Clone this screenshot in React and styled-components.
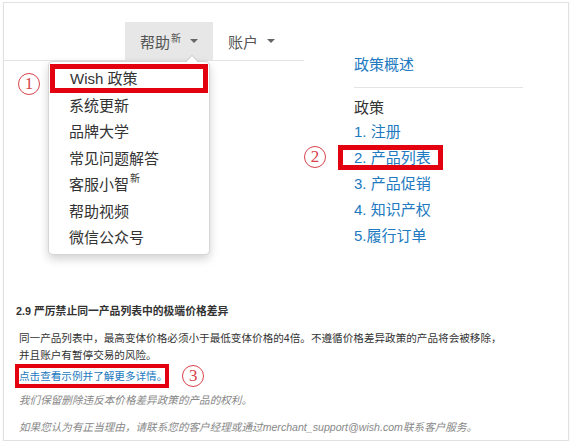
import React from 'react'
import styled, { createGlobalStyle, css } from 'styled-components'

const GlobalStyle = createGlobalStyle`
  body {
    margin: 0;
    background: #fff;
    font-family: "Liberation Sans", "Noto Sans CJK SC", sans-serif;
  }
`

const RED = '#e3000f'
const BLUE = '#2179c0'

const Card = styled.div`
  position: relative;
  box-sizing: border-box;
  margin: 2px 0 0 3px;
  width: 566px;
  height: 439px;
  border: 1px solid #e1e1e1;
  box-shadow: 0 1px 2px rgba(0, 0, 0, 0.06);
`

const Top = styled.div`
  display: grid;
  grid-template-columns: 300px 1fr;
`

const NavBar = styled.nav`
  display: flex;
  align-items: flex-end;
  height: 57px;
  padding-left: 121px;
  border-bottom: 1px solid #e3e3e3;
`

const Tab = styled.div`
  display: flex;
  align-items: center;
  height: 38px;
  padding: 0 15px;
  font-size: 15px;
  color: #555;
  ${p => p.$active && css`
    background: #e7e7e7;
  `}
`

const Sup = styled.sup`
  font-size: 10px;
  line-height: 0;
  position: relative;
  top: -2px;
  margin-left: 1px;
`

const Caret = styled.span`
  width: 0;
  height: 0;
  margin-left: 9px;
  border-left: 4px solid transparent;
  border-right: 4px solid transparent;
  border-top: 4px solid #666;
`

const Menu = styled.ul`
  position: absolute;
  left: 44px;
  top: 58px;
  width: 162px;
  height: 194px;
  box-sizing: border-box;
  margin: 0;
  padding: 2px 0 0;
  list-style: none;
  background: #fff;
  border: 1px solid rgba(0, 0, 0, 0.16);
  border-radius: 5px;
  box-shadow: 0 4px 10px rgba(0, 0, 0, 0.18);

  &::before {
    content: '';
    position: absolute;
    left: 136px;
    top: -7px;
    border-left: 7px solid transparent;
    border-right: 7px solid transparent;
    border-bottom: 7px solid rgba(0, 0, 0, 0.14);
  }
  &::after {
    content: '';
    position: absolute;
    left: 137px;
    top: -6px;
    border-left: 6px solid transparent;
    border-right: 6px solid transparent;
    border-bottom: 6px solid #fff;
  }
`

const MenuItem = styled.li`
  height: 26.4px;
  line-height: 26.4px;
  padding-left: 20px;
  font-size: 15px;
  color: #333;
  ${p => p.$marked && css`
    height: 29px;
    line-height: 29px;
    margin: 0 1px;
    outline: 5px solid ${RED};
    outline-offset: -5px;
  `}
`

const Circled = styled.span`
  display: inline-flex;
  align-items: center;
  justify-content: center;
  box-sizing: border-box;
  width: 22px;
  height: 22px;
  border: 1px solid #d8434b;
  border-radius: 50%;
  font-family: "Liberation Serif", serif;
  font-size: 17px;
  color: #d8434b;
`

const FloatingMark = styled(Circled)`
  position: absolute;
  left: 14px;
  top: 70px;
`

const Side = styled.div`
  padding-top: 50px;
`

const SideHead = styled.div`
  margin-left: 50px;
  line-height: 24px;
  font-size: 15px;
  color: ${BLUE};
`

const Divider = styled.hr`
  margin: 10px 0 0 50px;
  width: 169px;
  border: 0;
  border-top: 1px solid #e4e4e4;
`

const SideLabel = styled.div`
  margin: 10px 0 0 50px;
  line-height: 20px;
  font-size: 15px;
  color: #333;
`

const SideRow = styled.div`
  display: grid;
  grid-template-columns: 34px auto;
  align-items: center;
  height: 26px;
`

const SideLink = styled.span`
  justify-self: start;
  line-height: 25px;
  padding: 0 12px 0 16px;
  font-size: 15px;
  color: ${BLUE};
  ${p => p.$marked && css`
    outline: 5px solid ${RED};
    outline-offset: -5px;
  `}
`

const Policy = styled.section`
  margin-top: 54px;
  padding-left: 12px;
  font-size: 10.6px;
  color: #333;
`

const Heading = styled.h4`
  margin: 0;
  line-height: 18px;
  font-size: 10.8px;
  font-weight: bold;
  color: #333;
`

const Para = styled.p`
  margin: 10px 0 0 3px;
  width: 488px;
  line-height: 17px;
`

const LinkRow = styled.div`
  display: flex;
  align-items: center;
  gap: 13px;
  margin-left: -1px;
  height: 24px;
`

const BoxedLink = styled.span`
  line-height: 24px;
  padding: 0 2px 0 4px;
  color: ${BLUE};
  outline: 4px solid ${RED};
  outline-offset: -4px;
`

const Note = styled.p`
  margin: ${p => (p.$first ? '2px' : '7px')} 0 0 3px;
  line-height: 20px;
  font-style: italic;
  color: #888;
`

const menu = ['系统更新', '品牌大学', '常见问题解答']
const sideItems = ['1. 注册', '2. 产品列表', '3. 产品促销', '4. 知识产权', '5.履行订单']

export default function App() {
  return (
    <>
      <GlobalStyle />
      <Card>
        <Top>
          <NavBar>
            <Tab $active>帮助<Sup>新</Sup><Caret /></Tab>
            <Tab>账户<Caret /></Tab>
          </NavBar>
          <Side>
            <SideHead>政策概述</SideHead>
            <Divider />
            <SideLabel>政策</SideLabel>
            {sideItems.map((item, i) => (
              <SideRow key={item}>
                <span>{i === 1 && <Circled>2</Circled>}</span>
                <SideLink $marked={i === 1}>{item}</SideLink>
              </SideRow>
            ))}
          </Side>
        </Top>

        <Menu>
          <MenuItem $marked>Wish 政策</MenuItem>
          {menu.map(m => <MenuItem key={m}>{m}</MenuItem>)}
          <MenuItem>客服小智<Sup>新</Sup></MenuItem>
          <MenuItem>帮助视频</MenuItem>
          <MenuItem>微信公众号</MenuItem>
        </Menu>
        <FloatingMark>1</FloatingMark>

        <Policy>
          <Heading>2.9 严厉禁止同一产品列表中的极端价格差异</Heading>
          <Para>同一产品列表中，最高变体价格必须小于最低变体价格的4倍。不遵循价格差异政策的产品将会被移除，并且账户有暂停交易的风险。</Para>
          <LinkRow>
            <BoxedLink>点击查看示例并了解更多详情。</BoxedLink>
            <Circled>3</Circled>
          </LinkRow>
          <Note $first>我们保留删除违反本价格差异政策的产品的权利。</Note>
          <Note>如果您认为有正当理由，请联系您的客户经理或通过merchant_support@wish.com联系客户服务。</Note>
        </Policy>
      </Card>
    </>
  )
}
